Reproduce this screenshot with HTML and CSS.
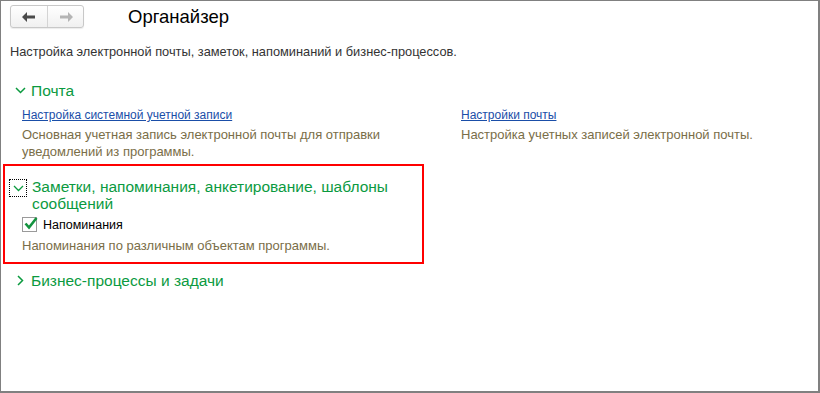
FILE: index.html
```html
<!DOCTYPE html>
<html lang="ru">
<head>
    <meta charset="UTF-8">
    <title>Органайзер</title>
    <link rel="stylesheet" href="styles.css">
</head>
<body>
    <div class="window">
        <div class="header">
            <div class="nav">
                <button class="nav-btn">
                    <svg width="14" height="10" viewBox="0 0 14 10"><path d="M0 5 L5 0 L5 3.5 L13 3.5 L13 6.5 L5 6.5 L5 10 Z" fill="#4a4a4a"/></svg>
                </button>
                <button class="nav-btn">
                    <svg width="14" height="10" viewBox="0 0 14 10"><path d="M14 5 L9 0 L9 3.5 L1 3.5 L1 6.5 L9 6.5 L9 10 Z" fill="#b4b4b4"/></svg>
                </button>
            </div>
            <h1>Органайзер</h1>
        </div>

        <p class="intro">Настройка электронной почты, заметок, напоминаний и бизнес-процессов.</p>

        <div class="group">
            <div class="group-title">
                <span class="chevron">
                    <svg width="11" height="7" viewBox="0 0 11 7"><path d="M1 1 L5.5 5.5 L10 1" fill="none" stroke="#0b9a3f" stroke-width="1.5"/></svg>
                </span>
                <span>Почта</span>
            </div>
            <div class="columns">
                <div class="col main-col">
                    <a href="#" class="link">Настройка системной учетной записи</a>
                    <p class="note">Основная учетная запись электронной почты для отправки уведомлений из программы.</p>
                </div>
                <div class="col">
                    <a href="#" class="link">Настройки почты</a>
                    <p class="note">Настройка учетных записей электронной почты.</p>
                </div>
            </div>
        </div>

        <div class="group highlighted">
            <div class="group-title">
                <span class="chevron focused">
                    <svg width="11" height="7" viewBox="0 0 11 7"><path d="M1 1 L5.5 5.5 L10 1" fill="none" stroke="#0b9a3f" stroke-width="1.3"/></svg>
                </span>
                <span>Заметки, напоминания, анкетирование, шаблоны сообщений</span>
            </div>
            <label class="check">
                <span class="box">
                    <svg width="14" height="13" viewBox="0 0 14 13"><path d="M1.5 6.5 L5 10.5 L12.5 1" fill="none" stroke="#13933f" stroke-width="2.6"/></svg>
                </span>
                Напоминания
            </label>
            <p class="note">Напоминания по различным объектам программы.</p>
        </div>

        <div class="group collapsed">
            <div class="group-title">
                <span class="chevron">
                    <svg width="7" height="11" viewBox="0 0 7 11"><path d="M1 1 L5.5 5.5 L1 10" fill="none" stroke="#0b9a3f" stroke-width="1.5"/></svg>
                </span>
                <span>Бизнес-процессы и задачи</span>
            </div>
        </div>
    </div>
</body>
</html>
```

FILE: styles.css
```css
body {
    margin: 0;
    font-family: "Liberation Sans", Arial, sans-serif;
    font-size: 12px;
    color: #333;
    background: #fff;
}

.window {
    width: 820px;
    height: 393px;
    box-sizing: border-box;
    border: 1px solid #808080;
    border-right-width: 2px;
    border-bottom-width: 2px;
    padding: 4px 9px 0 9px;
    overflow: hidden;
}

.header {
    display: flex;
    align-items: center;
    height: 23px;
}

.nav {
    display: flex;
    border: 1px solid #c8c8c8;
    border-radius: 3px;
    background: linear-gradient(#ffffff, #f0f0f0);
    box-shadow: 0 1px 1px rgba(0, 0, 0, 0.08);
}

.nav-btn {
    width: 36px;
    height: 21px;
    border: none;
    background: none;
    padding: 0;
    display: flex;
    align-items: center;
    justify-content: center;
}

.nav-btn + .nav-btn {
    border-left: 1px solid #d4d4d4;
}

h1 {
    margin: 0 0 0 44px;
    font-size: 18.5px;
    font-weight: normal;
    color: #000;
}

.intro {
    margin: 16px 0 0 0;
    font-size: 12.8px;
    color: #333;
}

.group {
    margin-top: 23px;
}

.group-title {
    display: flex;
    align-items: flex-start;
    font-size: 15.5px;
    color: #0b9a3f;
    line-height: 17px;
}

.chevron {
    flex-shrink: 0;
    width: 16px;
    height: 17px;
    margin: 0 3px 0 2px;
    display: flex;
    align-items: center;
    justify-content: center;
    box-sizing: border-box;
}

.chevron.focused {
    outline: 1px dotted #000;
    height: 16px;
    margin: 2px 6px 0 0;
}

.columns {
    display: grid;
    grid-template-columns: 439px 1fr;
    padding-left: 12px;
    margin-top: 9px;
}

.link {
    color: #1a4ea8;
    text-decoration: underline;
}

.note {
    margin: 4px 0 0 0;
    font-size: 13px;
    color: #7a6e48;
    line-height: 17px;
}

.main-col .note {
    width: 420px;
}

.highlighted {
    margin: 4px 0 0 -7px;
    width: 421px;
    height: 100px;
    box-sizing: border-box;
    border: 2px solid #ff0000;
    padding: 12px 0 0 5px;
}

.highlighted .group-title {
    padding-right: 30px;
}

.highlighted .note {
    margin: 5px 0 0 12px;
}

.check {
    display: flex;
    align-items: center;
    margin: 5px 0 0 12px;
    font-size: 12.5px;
    color: #000;
}

.box {
    width: 13px;
    height: 13px;
    border: 1px solid #9a9a9a;
    margin-right: 6px;
    display: flex;
    align-items: center;
    justify-content: center;
}

.box svg {
    margin: -3px -2px 0 0;
}

.collapsed {
    margin-top: 8px;
}
```
